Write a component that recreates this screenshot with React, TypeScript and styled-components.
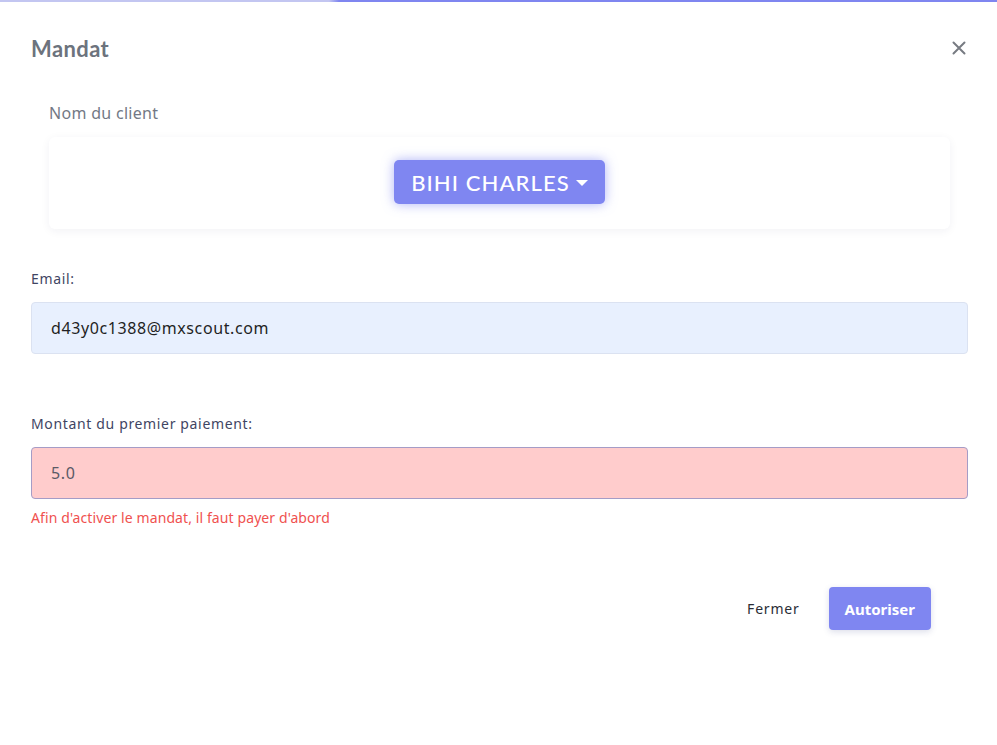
import React from 'react';
import styled, { createGlobalStyle } from 'styled-components';

const GlobalStyle = createGlobalStyle`
  html, body {
    margin: 0;
    padding: 0;
    background: #ffffff;
  }
  body {
    font-family: Lato, "Noto Sans", sans-serif;
  }
  * { box-sizing: border-box; }
`;

const Backdrop = styled.div`
  min-height: 745px;
  padding-top: 2px;
  background: linear-gradient(90deg, #c3c6f1 0%, #c3c6f1 33%, #7f86f0 34%, #7f86f0 100%) top / 100% 2px no-repeat, #ffffff;
`;

const Modal = styled.div`
  background: #ffffff;
  border-radius: 5px 5px 0 0;
  min-height: 743px;
`;

const Header = styled.div`
  display: flex;
  align-items: center;
  justify-content: space-between;
  padding: 30px 28px 0 31px;
  height: 62px;
`;

const Title = styled.h5`
  margin: 0;
  font-size: 22px;
  font-weight: 700;
  letter-spacing: 0.4px;
  color: #6c737d;
`;

const CloseButton = styled.button`
  border: 0;
  background: none;
  padding: 0;
  width: 20px;
  height: 20px;
  display: flex;
  align-items: center;
  justify-content: center;
  cursor: pointer;
`;

const Body = styled.div`
  padding: 38px 29px 0 31px;
`;

const ClientBlock = styled.div`
  padding: 0 18px;
`;

const ClientLabel = styled.div`
  font-family: "Noto Sans", Lato, sans-serif;
  font-size: 16px;
  letter-spacing: 0.3px;
  color: #737985;
  line-height: 22px;
  margin-bottom: 13px;
`;

const Card = styled.div`
  height: 92px;
  border-radius: 6px;
  background: #ffffff;
  box-shadow: 0 2px 10px rgba(30, 40, 80, 0.06);
  display: flex;
  align-items: center;
  justify-content: center;
  padding-bottom: 2px;
`;

const DropdownButton = styled.button`
  height: 44px;
  padding: 0 17px;
  border: 0;
  border-radius: 5px;
  background: #7f86f1;
  color: #ffffff;
  font-family: Lato, "Noto Sans", sans-serif;
  font-size: 22px;
  font-weight: 500;
  letter-spacing: 1.1px;
  display: flex;
  align-items: center;
  gap: 6px;
  box-shadow: 0 0 12px rgba(110, 118, 240, 0.55);
`;

const Caret = styled.span`
  width: 0;
  height: 0;
  border-left: 6px solid transparent;
  border-right: 6px solid transparent;
  border-top: 6px solid #ffffff;
  margin-top: 1px;
`;

const Field = styled.div<{ $top: number }>`
  margin-top: ${p => p.$top}px;
`;

const FieldLabel = styled.label`
  display: block;
  font-family: "Noto Sans", Inter, sans-serif;
  font-size: 14px;
  letter-spacing: 0.65px;
  color: #3f4563;
  line-height: 20px;
  margin-bottom: 13px;
`;

const Input = styled.input<{ $error?: boolean }>`
  display: block;
  width: 100%;
  height: 52px;
  padding: 0 19px;
  border-radius: 4px;
  border: 1px solid ${p => (p.$error ? '#a59cc6' : '#dbe2f1')};
  background: ${p => (p.$error ? '#ffcccc' : '#e8f0fe')};
  font-family: "Noto Sans", Inter, sans-serif;
  font-size: 16px;
  letter-spacing: 0.6px;
  color: ${p => (p.$error ? '#5a5a66' : '#1f1f24')};
  outline: none;
`;

const ErrorText = styled.div`
  font-family: "Noto Sans", Inter, sans-serif;
  font-size: 14px;
  letter-spacing: 0.1px;
  color: #f0514f;
  margin-top: 9px;
  line-height: 20px;
`;

const Footer = styled.div`
  display: flex;
  justify-content: flex-end;
  align-items: center;
  gap: 29px;
  padding: 59px 37px 0 0;
`;

const LinkButton = styled.button`
  border: 0;
  background: none;
  font-family: "Noto Sans", Inter, sans-serif;
  font-size: 14px;
  letter-spacing: 0.8px;
  color: #2a2d36;
  padding: 0;
`;

const PrimaryButton = styled.button`
  height: 43px;
  padding: 0 16px;
  border: 0;
  border-radius: 4px;
  background: #7f86f1;
  color: #ffffff;
  font-family: "Noto Sans", Inter, sans-serif;
  font-size: 15px;
  font-weight: 700;
  box-shadow: 0 2px 6px rgba(60, 70, 140, 0.18);
`;

export default function App(): JSX.Element {
  return (
    <>
      <GlobalStyle />
      <Backdrop>
        <Modal>
          <Header>
            <Title>Mandat</Title>
            <CloseButton aria-label="Fermer">
              <svg width="14" height="14" viewBox="0 0 14 14">
                <path d="M1.5 1.5 L12.5 12.5 M12.5 1.5 L1.5 12.5" stroke="#777b82" strokeWidth="2" strokeLinecap="round" />
              </svg>
            </CloseButton>
          </Header>
          <Body>
            <ClientBlock>
              <ClientLabel>Nom du client</ClientLabel>
              <Card>
                <DropdownButton>
                  BIHI CHARLES
                  <Caret />
                </DropdownButton>
              </Card>
            </ClientBlock>

            <Field $top={40}>
              <FieldLabel>Email:</FieldLabel>
              <Input defaultValue="d43y0c1388@mxscout.com" />
            </Field>

            <Field $top={60}>
              <FieldLabel>Montant du premier paiement:</FieldLabel>
              <Input $error defaultValue="5.0" />
              <ErrorText>Afin d'activer le mandat, il faut payer d'abord</ErrorText>
            </Field>

            <Footer>
              <LinkButton>Fermer</LinkButton>
              <PrimaryButton>Autoriser</PrimaryButton>
            </Footer>
          </Body>
        </Modal>
      </Backdrop>
    </>
  );
}
